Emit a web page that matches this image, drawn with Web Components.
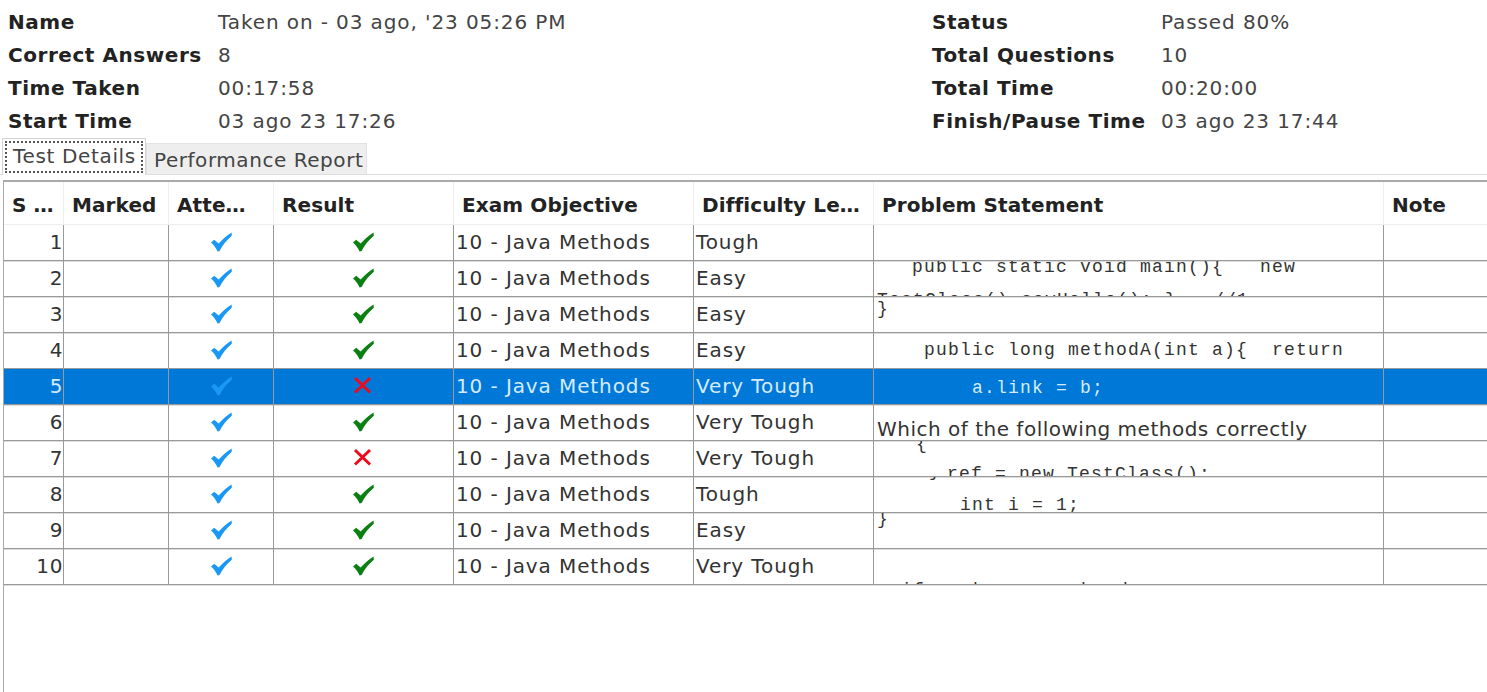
<!DOCTYPE html>
<html>
<head>
<meta charset="utf-8">
<title>Test Details</title>
<style>
    html, body { margin: 0; height: 100%; overflow: hidden; background: #fff; }
    body { font-family: "DejaVu Sans", sans-serif; font-size: 20px; letter-spacing: .9px; color: #333; }
</style>
</head>
<body>
<exam-view></exam-view>

<script>
// una fila de datos de la cabecera: etiqueta en negrita y valor
class SummaryItem extends HTMLElement {
    constructor() {
        super();
        this.attachShadow({ mode: "open" });
    }

    connectedCallback() {
        this.shadowRoot.innerHTML = `
            <style>
                :host { display: contents; }
                b { font-weight: 700; color: #222; line-height: 33px; letter-spacing: .55px; white-space: nowrap; }
                span { color: #444; line-height: 33px; white-space: nowrap; }
            </style>
            <b>${this.getAttribute("label")}</b><span>${this.getAttribute("value")}</span>
        `;
    }
}
customElements.define("summary-item", SummaryItem);

class ExamSummary extends HTMLElement {
    constructor() {
        super();
        this.attachShadow({ mode: "open" });
    }

    connectedCallback() {
        this.shadowRoot.innerHTML = `
            <style>
                :host {
                    display: grid;
                    grid-template-columns: 210px 714px 229px 1fr;
                    padding: 6px 0 0 8px;
                    height: 132px;
                }
            </style>
            <slot></slot>
        `;
    }
}
customElements.define("exam-summary", ExamSummary);

class ExamTabs extends HTMLElement {
    constructor() {
        super();
        this.attachShadow({ mode: "open" });
    }

    connectedCallback() {
        this.shadowRoot.innerHTML = `
            <style>
                :host {
                    display: flex;
                    align-items: flex-end;
                    height: 36px;
                    padding-left: 2px;
                    border-bottom: 1px solid #ddd;
                    margin-bottom: 5px;
                }
                .tab { box-sizing: border-box; white-space: nowrap; color: #444; }
                .on {
                    width: 144px;
                    height: 37px;
                    margin-bottom: -1px;
                    padding: 2px;
                    background: #fff;
                    border: 1px solid #d4d4d4;
                    border-bottom: 0;
                }
                .on div {
                    box-sizing: border-box;
                    height: 32px;
                    padding-left: 6px;
                    line-height: 27px;
                    border: 2px dotted #555;
                    letter-spacing: .65px;
                }
                .off {
                    width: 221px;
                    height: 31px;
                    padding-left: 7px;
                    line-height: 33px;
                    background: #eee;
                    border: 1px solid #e2e2e2;
                    border-bottom: 0;
                    letter-spacing: .55px;
                }
            </style>
            <div class="tab on"><div>Test Details</div></div>
            <div class="tab off">Performance Report</div>
        `;
    }
}
customElements.define("exam-tabs", ExamTabs);

// los iconos de estado, dibujados con svg
class StatusIcon extends HTMLElement {
    constructor() {
        super();
        this.attachShadow({ mode: "open" });
    }

    connectedCallback() {
        const kind = this.getAttribute("kind");
        const color = { seen: "#1a98f5", ok: "#0b7f12", bad: "#ee0a1c" }[kind];
        const shape = kind === "bad"
            ? `<path d="M2 2 L17 16.5 M17 2 L2 16.5" fill="none" stroke="${color}" stroke-width="3"/>`
            : `<path d="M0 10.5 L3.2 7.8 L7.6 11.6 C11 7.6 15.6 3.8 20.6 0.4 L20.8 3.8 C15.6 8.2 11.6 13.2 8.6 19 L6.6 19.4 C5 16.2 3 13 0 10.5 Z" fill="${color}"/>`;
        this.shadowRoot.innerHTML = `
            <style>
                :host { display: block; width: 21px; height: 20px; }
                svg { display: block; }
            </style>
            <svg width="21" height="20" viewBox="0 0 21 20">${shape}</svg>
        `;
    }
}
customElements.define("status-icon", StatusIcon);

// linea de codigo del enunciado
class CodeLine extends HTMLElement {
    constructor() {
        super();
        this.attachShadow({ mode: "open" });
    }

    connectedCallback() {
        this.shadowRoot.innerHTML = `
            <style>
                :host {
                    display: block;
                    padding-left: ${this.getAttribute("x") || 0}px;
                    margin-top: ${this.getAttribute("top") || 0}px;
                    font-family: "Liberation Mono", monospace;
                    font-size: 18px;
                    letter-spacing: 1.2px;
                    line-height: 28px;
                }
                slot { white-space: pre; } /* en el host tambien contaria el espacio del shadow */
            </style>
            <slot></slot>
        `;
    }
}
customElements.define("code-line", CodeLine);

class ResultRow extends HTMLElement {
    constructor() {
        super();
        this.attachShadow({ mode: "open" });
    }

    connectedCallback() {
        const attr = (name) => this.getAttribute(name);
        this.shadowRoot.innerHTML = `
            <style>
                :host {
                    display: grid;
                    grid-template-columns: var(--columns);
                    height: 36px;
                    box-sizing: border-box;
                    border-bottom: 1px solid #999;
                    box-shadow: 0 1px 0 #ddd;
                    color: #333;
                }
                :host([selected]) { background: #0078d7; color: #d6ebff; }
                .cell {
                    box-sizing: border-box;
                    height: 35px;
                    overflow: hidden;
                    white-space: nowrap;
                    border-right: 1px solid #999;
                    line-height: 35px;
                }
                .num { text-align: right; letter-spacing: .6px; }
                .icon { display: flex; justify-content: center; padding: 7px 0 0 0; }
                .text { padding-left: 2px; }
                .problem { padding-left: 3px; line-height: normal; }
            </style>
            <div class="cell num">${attr("n")}</div>
            <div class="cell"></div>
            <div class="cell icon"><status-icon kind="seen"></status-icon></div>
            <div class="cell icon"><status-icon kind="${attr("result")}"></status-icon></div>
            <div class="cell text">10 - Java Methods</div>
            <div class="cell text">${attr("level")}</div>
            <div class="cell problem"><slot></slot></div>
            <div class="cell"></div>
        `;
    }
}
customElements.define("result-row", ResultRow);

class ResultTable extends HTMLElement {
    constructor() {
        super();
        this.attachShadow({ mode: "open" });
    }

    connectedCallback() {
        this.shadowRoot.innerHTML = `
            <style>
                :host {
                    display: block;
                    --columns: 60px 105px 105px 180px 240px 180px 510px 110px;
                    width: 1500px;
                    height: 520px;
                    margin-left: 3px;
                    box-sizing: border-box;
                    border-left: 1px solid #aaa;
                    border-top: 2px solid #aaa;
                }
                .head {
                    display: grid;
                    grid-template-columns: var(--columns);
                    height: 42px;
                    font-weight: 700;
                    letter-spacing: .1px;
                    color: #222;
                    line-height: 46px;
                    white-space: nowrap;
                    border-bottom: 1px solid #eee;
                }
                .head div { box-sizing: border-box; padding-left: 8px; border-right: 1px solid #eee; overflow: hidden; }
            </style>
            <div class="head">
                <div>S …</div><div>Marked</div><div>Atte…</div><div>Result</div>
                <div>Exam Objective</div><div>Difficulty Le…</div><div>Problem Statement</div><div>Note</div>
            </div>
            <slot></slot>
        `;
    }
}
customElements.define("result-table", ResultTable);

class ExamView extends HTMLElement {
    constructor() {
        super();
        this.attachShadow({ mode: "open" });
    }

    connectedCallback() {
        this.shadowRoot.innerHTML = `
            <style>
                :host { display: block; }
                .sans { display: block; margin-top: 10px; font-size: 20px; letter-spacing: .5px; line-height: 28px; white-space: pre; }
            </style>
            <exam-summary>
                <summary-item label="Name" value="Taken on - 03 ago, '23 05:26 PM"></summary-item>
                <summary-item label="Status" value="Passed 80%"></summary-item>
                <summary-item label="Correct Answers" value="8"></summary-item>
                <summary-item label="Total Questions" value="10"></summary-item>
                <summary-item label="Time Taken" value="00:17:58"></summary-item>
                <summary-item label="Total Time" value="00:20:00"></summary-item>
                <summary-item label="Start Time" value="03 ago 23 17:26"></summary-item>
                <summary-item label="Finish/Pause Time" value="03 ago 23 17:44"></summary-item>
            </exam-summary>
            <exam-tabs></exam-tabs>
            <result-table>
                <result-row n="1" level="Tough" result="ok"></result-row>
                <result-row n="2" level="Easy" result="ok">
                    <code-line x="35" top="-8">public static void main(){   new</code-line>
                    <code-line top="5">TestClass().sayHello(); }   //1</code-line>
                </result-row>
                <result-row n="3" level="Easy" result="ok"><code-line top="-2">}</code-line></result-row>
                <result-row n="4" level="Easy" result="ok"><code-line x="47" top="3">public long methodA(int a){  return</code-line></result-row>
                <result-row n="5" level="Very Tough" result="bad" selected><code-line x="95" top="5">a.link = b;</code-line></result-row>
                <result-row n="6" level="Very Tough" result="ok"><span class="sans">Which of the following methods correctly</span></result-row>
                <result-row n="7" level="Very Tough" result="bad">
                    <code-line x="39" top="-11">{</code-line>
                    <code-line x="70" top="2">ref = new TestClass();</code-line>
                </result-row>
                <result-row n="8" level="Tough" result="ok">
                    <code-line x="52" top="-20">}</code-line>
                    <code-line x="83" top="6">int i = 1;</code-line>
                </result-row>
                <result-row n="9" level="Easy" result="ok"><code-line top="-8">}</code-line></result-row>
                <result-row n="10" level="Very Tough" result="ok"><code-line top="27">  if a  b = a + cb  d;</code-line></result-row>
            </result-table>
        `;
    }
}
customElements.define("exam-view", ExamView);
</script>
</body>
</html>
